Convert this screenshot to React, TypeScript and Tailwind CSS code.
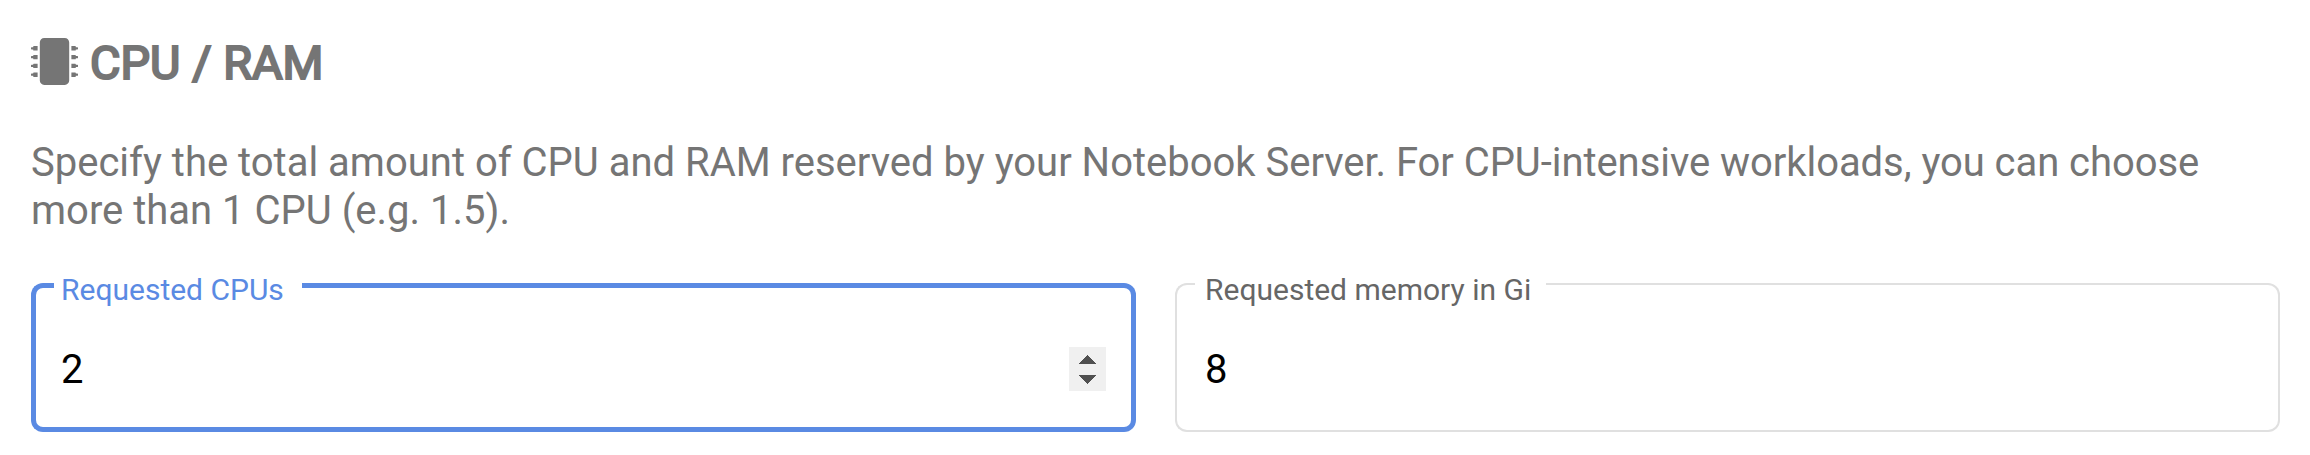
import { FaMicrochip } from "react-icons/fa";

function Spinner() {
  return (
    <div className="flex h-11 w-[37px] items-center justify-center bg-[#f0f0f0]">
      <svg width="17" height="29" viewBox="0 0 17 29" fill="#505050" shapeRendering="crispEdges" aria-hidden="true">
        <path d="M8.5 0L17 9H0z" />
        <path d="M0 20h17l-8.5 9z" />
      </svg>
    </div>
  );
}

function FocusedField() {
  return (
    <div className="relative flex h-[149px] w-[1105px]">
      <div className="w-[23px] rounded-l-[12px] border-y-5 border-l-5 border-[#5a8ae3]" />
      <div className="w-[248px] border-b-5 border-[#5a8ae3]">
        <label className="block -translate-y-[11px] pl-[7px] text-[30px] leading-9 whitespace-nowrap text-[#5a8ae3]">
          Requested CPUs
        </label>
      </div>
      <div className="flex-1 rounded-r-[12px] border-y-5 border-r-5 border-[#5a8ae3]" />
      <div className="absolute inset-x-[30px] top-[62px] flex h-[48px] items-center justify-between text-[40px] leading-[48px] text-black">
        <span className="pt-[2px]">2</span>
        <Spinner />
      </div>
    </div>
  );
}

function MemoryField() {
  return (
    <div className="relative flex h-[149px] w-[1105px]">
      <div className="w-[20px] rounded-l-[12px] border-y-2 border-l-2 border-[#e0e0e0]" />
      <div className="w-[351px] border-b-2 border-[#e0e0e0]">
        <label className="block -translate-y-[11px] pl-[10px] text-[30px] leading-9 whitespace-nowrap text-[#666666]">
          Requested memory in Gi
        </label>
      </div>
      <div className="flex-1 rounded-r-[12px] border-y-2 border-r-2 border-[#e0e0e0]" />
      <div className="absolute inset-x-[30px] top-[63px] text-[40px] leading-[48px] text-black">8</div>
    </div>
  );
}

export default function App() {
  return (
    <main className="h-[455px] w-[2310px] overflow-hidden bg-white pt-[34px] pl-[31px] font-['Roboto',sans-serif]">
      <h3 className="flex h-14 items-center text-[46.8px] leading-14 font-normal text-[#757575]">
        <FaMicrochip size={47} className="mr-3 mb-[2px]" />
        <span className="pt-[1px] tracking-[0.05px] [-webkit-text-stroke:2.2px_#757575]">CPU / RAM</span>
      </h3>
      <p className="mt-[49px] w-[2249px] text-[40px] leading-[48px] text-[#757575]">
        Specify the total amount of CPU and RAM reserved by your Notebook{" "}
        <span className="tracking-[-0.055px]">Server. For CPU-intensive workloads, you can choose</span> more than 1 CPU
        (e.g. 1.5).
      </p>
      <div className="mt-[48px] flex gap-[39px]">
        <FocusedField />
        <MemoryField />
      </div>
    </main>
  );
}
